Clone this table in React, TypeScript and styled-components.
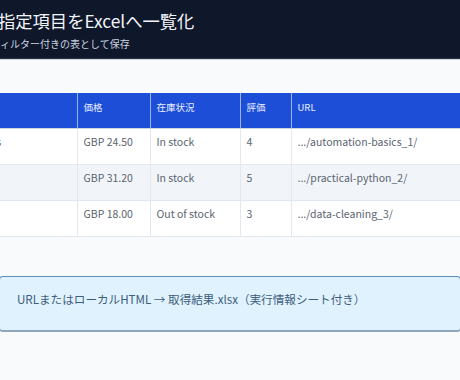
import React from "react";
import styled, { createGlobalStyle } from "styled-components";

const GlobalStyle = createGlobalStyle`
  html, body {
    margin: 0;
    padding: 0;
    overflow: hidden;
    background: #f8fafc;
    font-family: "Noto Sans CJK JP", "Noto Sans", sans-serif;
  }
`;

const Page = styled.div`
  width: 460px;
  height: 380px;
  overflow: hidden;
`;

const Header = styled.header`
  background: #0f172a;
  height: 59px;
  box-sizing: border-box;
  padding-top: 9px;
  border-bottom: 1px solid #2b3240;
  box-shadow: 0 1px 0 #cfd5dd;
  display: flex;
  flex-direction: column;
  gap: 4px;
`;

const Title = styled.h1`
  margin: 0 0 0 -2px;
  font-size: 17.3px;
  line-height: 24px;
  font-weight: 400;
  color: #f1f5f9;
  white-space: nowrap;
`;

const Subtitle = styled.p`
  margin: 0;
  font-size: 10px;
  line-height: 14px;
  color: #cbd5e1;
  white-space: nowrap;
`;

const Main = styled.main`
  padding-top: 34px;
  display: flex;
  flex-direction: column;
  gap: 39px;
`;

const Table = styled.table`
  border-collapse: collapse;
  margin-left: -96px;
  width: 730px;
  table-layout: fixed;
  font-size: 10.5px;
`;

const Th = styled.th<{ w: number }>`
  width: ${(p) => p.w}px;
  background: #1d4ed8;
  color: #e8eeff;
  font-weight: 400;
  font-size: 9.5px;
  text-align: left;
  vertical-align: top;
  height: 35px;
  box-sizing: border-box;
  padding: 6px 6px;
  border-right: 1.5px solid #9db2ee;
  border-bottom: 1px solid #cbd5e1;
  line-height: 16px;
`;

const Row = styled.tr<{ alt?: boolean }>`
  background: ${(p) => (p.alt ? "#f1f5f9" : "#ffffff")};
`;

const Td = styled.td`
  color: #5b6470;
  vertical-align: top;
  height: 36px;
  box-sizing: border-box;
  padding: 5px 6px;
  line-height: 16px;
  border-right: 1px solid #e2e8f0;
  border-bottom: 1px solid #e2e8f0;
  white-space: nowrap;
  overflow: hidden;
`;

const Note = styled.div`
  margin-left: -1px;
  width: 462px;
  box-sizing: border-box;
  height: 56px;
  padding: 13px 17px;
  background: #e0f2fe;
  border: 1px solid #5d8fb8;
  border-bottom: 2px solid #8ea6bb;
  border-radius: 4px;
  color: #3d5d7c;
  font-size: 11.6px;
  line-height: 18px;
  white-space: nowrap;
`;

const rows = [
  ["Automation Basics", "GBP 24.50", "In stock", "4", ".../automation-basics_1/"],
  ["Practical Python", "GBP 31.20", "In stock", "5", ".../practical-python_2/"],
  ["Data Cleaning", "GBP 18.00", "Out of stock", "3", ".../data-cleaning_3/"],
];

const columns: [string, number][] = [
  ["タイトル", 173],
  ["価格", 73],
  ["在庫状況", 90],
  ["評価", 51],
  ["URL", 343],
];

export default function App() {
  return (
    <Page>
      <GlobalStyle />
      <Header>
        <Title>指定項目をExcelへ一覧化</Title>
        <Subtitle>ィルター付きの表として保存</Subtitle>
      </Header>
      <Main>
        <Table>
          <thead>
            <tr>
              {columns.map(([label, w]) => (
                <Th key={label} w={w}>
                  {label}
                </Th>
              ))}
            </tr>
          </thead>
          <tbody>
            {rows.map((r, i) => (
              <Row key={r[4]} alt={i === 1}>
                {r.map((c, j) => (
                  <Td key={j}>{c}</Td>
                ))}
              </Row>
            ))}
          </tbody>
        </Table>
        <Note>URLまたはローカルHTML → 取得結果.xlsx（実行情報シート付き）</Note>
      </Main>
    </Page>
  );
}
